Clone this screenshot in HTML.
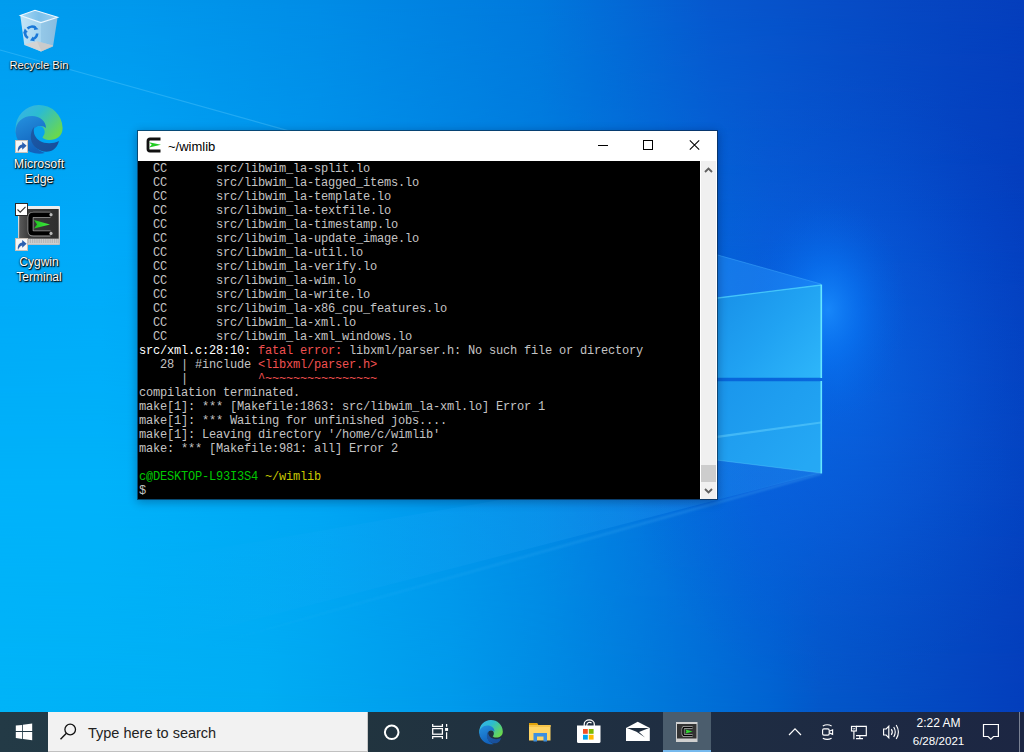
<!DOCTYPE html>
<html><head><meta charset="utf-8">
<style>
*{margin:0;padding:0;box-sizing:border-box}
html,body{width:1024px;height:752px;overflow:hidden;background:#0a6fd8}
body{position:relative;font-family:"Liberation Sans",sans-serif}
.abs{position:absolute}
svg{position:absolute;overflow:visible}
.lbl{position:absolute;width:78px;left:0;text-align:center;color:#fff;font-size:12px;line-height:15px;white-space:nowrap;
 text-shadow:0 0 1px #000,1px 1px 1px #000,0 1px 2px rgba(0,0,0,.7)}
#win{position:absolute;left:137px;top:130px;width:581px;height:370px;border:1px solid rgba(12,36,60,.62);background:#fff;background-clip:padding-box;
 box-shadow:0 2px 9px rgba(0,10,40,.32)}
#title{position:absolute;left:0;top:0;width:579px;height:30px;background:#fff}
#term{position:absolute;left:0;top:30px;width:562px;height:338px;background:#000;overflow:hidden}
#sb{position:absolute;left:562px;top:30px;width:17px;height:338px;background:#f0f0f0;border-left:1px solid #fff;border-right:1px solid #fff}
pre{font-family:"Liberation Mono",monospace;font-size:12px;letter-spacing:-0.2px;line-height:14px;color:#c4c4c4;position:absolute;left:1px;top:0.5px}
.w{color:#fff}.r{color:#f05050}.g{color:#00c800}.y{color:#c8c800}
#taskbar{position:absolute;left:0;top:712px;width:1024px;height:40px;
 background:linear-gradient(90deg,#233a46 0%,#21343f 35%,#1f2e42 65%,#1c2643 100%)}
#search{position:absolute;left:48px;top:0;width:320px;height:40px;background:#f2f2f2;border-right:1px solid #c8c8c8;border-bottom:1px solid #c0c0c0}
.tray{position:absolute;color:#fff;font-size:12px;white-space:nowrap}
</style></head><body>
<svg id="wall" width="1024" height="712" viewBox="0 0 1024 712" style="position:absolute;left:0;top:0">
 <defs>
  <linearGradient id="r0" x1="0" y1="0" x2="1024" y2="0" gradientUnits="userSpaceOnUse">
   <stop offset="0.0000" stop-color="rgb(0,156,238)"/>
   <stop offset="0.1270" stop-color="rgb(0,152,236)"/>
   <stop offset="0.3125" stop-color="rgb(0,140,230)"/>
   <stop offset="0.5273" stop-color="rgb(0,120,220)"/>
   <stop offset="0.6934" stop-color="rgb(6,88,206)"/>
   <stop offset="0.8496" stop-color="rgb(6,74,196)"/>
   <stop offset="1.0000" stop-color="rgb(4,62,188)"/>
  </linearGradient>
  <linearGradient id="r1" x1="0" y1="0" x2="1024" y2="0" gradientUnits="userSpaceOnUse">
   <stop offset="0.0000" stop-color="rgb(0,168,248)"/>
   <stop offset="0.0977" stop-color="rgb(0,170,249)"/>
   <stop offset="0.3125" stop-color="rgb(0,150,238)"/>
   <stop offset="0.5273" stop-color="rgb(0,126,224)"/>
   <stop offset="0.7520" stop-color="rgb(6,90,212)"/>
   <stop offset="0.9473" stop-color="rgb(4,66,194)"/>
   <stop offset="1.0000" stop-color="rgb(4,62,190)"/>
  </linearGradient>
  <linearGradient id="r2" x1="0" y1="0" x2="1024" y2="0" gradientUnits="userSpaceOnUse">
   <stop offset="0.0000" stop-color="rgb(0,178,250)"/>
   <stop offset="0.0977" stop-color="rgb(0,178,250)"/>
   <stop offset="0.3125" stop-color="rgb(0,166,244)"/>
   <stop offset="0.5273" stop-color="rgb(0,140,230)"/>
   <stop offset="0.7422" stop-color="rgb(6,96,216)"/>
   <stop offset="0.8789" stop-color="rgb(6,78,200)"/>
   <stop offset="1.0000" stop-color="rgb(4,66,192)"/>
  </linearGradient>
  <linearGradient id="r3" x1="0" y1="0" x2="1024" y2="0" gradientUnits="userSpaceOnUse">
   <stop offset="0.0000" stop-color="rgb(0,180,248)"/>
   <stop offset="0.2539" stop-color="rgb(0,174,244)"/>
   <stop offset="0.4395" stop-color="rgb(0,155,236)"/>
   <stop offset="0.6250" stop-color="rgb(0,124,220)"/>
   <stop offset="0.7520" stop-color="rgb(0,100,210)"/>
   <stop offset="0.8008" stop-color="rgb(4,88,202)"/>
   <stop offset="1.0000" stop-color="rgb(4,62,188)"/>
  </linearGradient>
  <linearGradient id="m2" x1="0" y1="0" x2="0" y2="712" gradientUnits="userSpaceOnUse"><stop offset="0.6742" stop-color="#fff"/><stop offset="1" stop-color="#000"/></linearGradient>
  <linearGradient id="m1" x1="0" y1="0" x2="0" y2="712" gradientUnits="userSpaceOnUse"><stop offset="0.3090" stop-color="#fff"/><stop offset="0.6742" stop-color="#000"/></linearGradient>
  <linearGradient id="m0" x1="0" y1="0" x2="0" y2="712" gradientUnits="userSpaceOnUse"><stop offset="0" stop-color="#fff"/><stop offset="0.3090" stop-color="#000"/></linearGradient>
  <mask id="mk2" maskUnits="userSpaceOnUse" x="0" y="0" width="1024" height="712"><rect width="1024" height="712" fill="url(#m2)"/></mask>
  <mask id="mk1" maskUnits="userSpaceOnUse" x="0" y="0" width="1024" height="712"><rect width="1024" height="712" fill="url(#m1)"/></mask>
  <mask id="mk0" maskUnits="userSpaceOnUse" x="0" y="0" width="1024" height="712"><rect width="1024" height="712" fill="url(#m0)"/></mask>
  <radialGradient id="glow" cx="828" cy="310" r="100" gradientUnits="userSpaceOnUse" gradientTransform="translate(828 310) scale(0.8 1.15) translate(-828 -310)">
   <stop offset="0" stop-color="#1a8eff" stop-opacity="0.85"/>
   <stop offset="0.4" stop-color="#0a7cfa" stop-opacity="0.5"/>
   <stop offset="1" stop-color="#0060e0" stop-opacity="0"/>
  </radialGradient>
  <radialGradient id="glow2" cx="840" cy="380" r="260" gradientUnits="userSpaceOnUse" gradientTransform="translate(840 380) scale(0.9 1.2) translate(-840 -380)">
   <stop offset="0" stop-color="#0a70f0" stop-opacity="0.55"/>
   <stop offset="0.5" stop-color="#0a62e4" stop-opacity="0.3"/>
   <stop offset="1" stop-color="#0050d0" stop-opacity="0"/>
  </radialGradient>
  <linearGradient id="beamLo" x1="821" y1="0" x2="150" y2="0" gradientUnits="userSpaceOnUse">
   <stop offset="0" stop-color="#38b0ff" stop-opacity="0.26"/>
   <stop offset="1" stop-color="#38b0ff" stop-opacity="0"/>
  </linearGradient>
  <linearGradient id="beamLn" x1="821" y1="0" x2="200" y2="0" gradientUnits="userSpaceOnUse">
   <stop offset="0" stop-color="#60c8ff" stop-opacity="0.3"/>
   <stop offset="1" stop-color="#60c8ff" stop-opacity="0"/>
  </linearGradient>
  <filter id="blur1" x="-10%" y="-50%" width="120%" height="200%"><feGaussianBlur stdDeviation="0.8"/></filter>
  <filter id="blur3" x="-50%" y="-50%" width="200%" height="200%"><feGaussianBlur stdDeviation="4"/></filter>
  <linearGradient id="pUp" x1="718" y1="290" x2="821" y2="378" gradientUnits="userSpaceOnUse">
   <stop offset="0" stop-color="#1890e8"/>
   <stop offset="0.5" stop-color="#20a2f2"/>
   <stop offset="1" stop-color="#2eb6fa"/>
  </linearGradient>
  <linearGradient id="pLo" x1="718" y1="381" x2="821" y2="473" gradientUnits="userSpaceOnUse">
   <stop offset="0" stop-color="#1a96ec"/>
   <stop offset="1" stop-color="#24a8f4"/>
  </linearGradient>
  </defs>
 <rect width="1024" height="712" fill="url(#r3)"/>
 <rect width="1024" height="712" fill="url(#r2)" mask="url(#mk2)"/>
 <rect width="1024" height="712" fill="url(#r1)" mask="url(#mk1)"/>
 <rect width="1024" height="712" fill="url(#r0)" mask="url(#mk0)"/>
 <rect width="1024" height="712" fill="url(#glow2)"/>
 <rect width="1024" height="712" fill="url(#glow)"/>
 <polygon points="540,205 718,255 821,284 718,298 540,330" fill="#2a9cff" opacity="0.42"/>
 <line x1="600" y1="222" x2="821" y2="284" stroke="#44b0ff" stroke-width="1" opacity="0.45"/>
 <polygon points="821,473 718,458 500,500 150,560 150,646.5" fill="url(#beamLo)"/>
 <line x1="821" y1="473.5" x2="200" y2="648" stroke="url(#beamLn)" stroke-width="2" filter="url(#blur1)"/>
 <polygon points="700,300 821,285 821,378 700,378" fill="url(#pUp)"/>
 <polygon points="700,381 821,381 821,473 700,458" fill="url(#pLo)"/>
 <polygon points="700,438 821,422 821,473 700,458" fill="#40c0ff" opacity="0.08"/>
 <polygon points="700,438 821,421.5 821,423.5 700,440.5" fill="#6cd8ff" opacity="0.45"/>
 <line x1="700" y1="300.2" x2="821" y2="285" stroke="#50d4ff" stroke-width="1.4" opacity="0.8"/>
 <line x1="700" y1="458" x2="821" y2="473" stroke="#60d0ff" stroke-width="1" opacity="0.35"/>
 <rect x="700" y="377.5" width="122" height="4" fill="#0a6ad8" opacity="0.5"/>
 <line x1="821.3" y1="284.5" x2="821.3" y2="378" stroke="#66e6ff" stroke-width="1.6"/>
 <line x1="821.3" y1="381" x2="821.3" y2="473.5" stroke="#66e6ff" stroke-width="1.6"/>
 <line x1="0" y1="50" x2="320" y2="139.6" stroke="#70d4ff" stroke-width="1.2" opacity="0.3"/>
</svg>
<!-- ============ desktop icons ============ -->
<!-- Recycle bin -->
<svg width="48" height="48" style="left:15px;top:6px" viewBox="0 0 48 48">
 <defs>
  <linearGradient id="rbL" x1="0" y1="0" x2="1" y2="0">
   <stop offset="0" stop-color="#c2e4f6"/><stop offset="1" stop-color="#a4d4f0"/>
  </linearGradient>
  <linearGradient id="rbR" x1="0" y1="0" x2="1" y2="0">
   <stop offset="0" stop-color="#94c8e8"/><stop offset="1" stop-color="#88bce0"/>
  </linearGradient>
  <linearGradient id="rbIn" x1="0" y1="0" x2="1" y2="0">
   <stop offset="0" stop-color="#a8d8f4"/><stop offset="0.5" stop-color="#7cc0ea"/><stop offset="1" stop-color="#9ad0f0"/>
  </linearGradient>
 </defs>
 <polygon points="5.3,9.6 26,16.6 26,45.6 9.3,39" fill="url(#rbL)"/>
 <polygon points="26,16.6 42.6,11.3 38,40.6 26,45.6" fill="url(#rbR)"/>
 <polygon points="9.3,38.3 22,35.3 38,39.6 26,45.6" fill="#d4d4d4"/>
 <polygon points="22,35.3 38,39.6 38,40.6 26,45.6 26,44" fill="#c4c4c4" opacity="0.6"/>
 <polygon points="5.3,9.6 20,4.3 42.6,11.3 26,16.6" fill="url(#rbIn)" stroke="#eef8ff" stroke-width="1.1"/>
 <g fill="none" stroke="#1a78d8" stroke-width="2.6">
  <path d="M12.5,22.5 A6.2,6.2 0 0 1 20.5,21.8"/>
  <path d="M22.2,27.5 A6.2,6.2 0 0 1 17.8,33"/>
  <path d="M13,32 A6.2,6.2 0 0 1 10.3,25.5"/>
 </g>
 <g fill="#1a78d8">
  <polygon points="19.5,19.5 23.5,23.2 19,24"/>
  <polygon points="19.8,35.2 15,34.5 17.8,30.5"/>
  <polygon points="8,27.5 9.8,22.5 12.8,26"/>
 </g>
</svg>
<div class="lbl" style="top:58px;font-size:11.2px;letter-spacing:0px">Recycle Bin</div>

<!-- Edge -->
<svg width="48" height="48" style="left:15px;top:104.5px" viewBox="0 0 48 48">
 <defs>
  <linearGradient id="edTop" x1="0" y1="0" x2="1" y2="0.7">
   <stop offset="0" stop-color="#3ab0ec"/><stop offset="0.45" stop-color="#2cbcd0"/><stop offset="1" stop-color="#6ad84e"/>
  </linearGradient>
  <linearGradient id="edLeft" x1="0" y1="0" x2="0.4" y2="1">
   <stop offset="0" stop-color="#2592e0"/><stop offset="1" stop-color="#1262bc"/>
  </linearGradient>
  <linearGradient id="edDark" x1="0" y1="0" x2="1" y2="1">
   <stop offset="0" stop-color="#1c5aa8"/><stop offset="1" stop-color="#174d98"/>
  </linearGradient>
 </defs>
 <path d="M0.5,24 A23.5,23.5 0 0 1 47.6,23 C47.6,31 42,35 34,35 C28,35 25,31 27,26 C24,20 17,17 11,19 C6,21 2,25 0.5,28 Z" fill="url(#edTop)"/>
 <path d="M0.5,27 C0.5,17 8,11 17,11 C25,11 31,16 31,23 C28,20 21,20 18,25 C15,31 16,40 24,45 C27,47 30,48 30,48 A24,24 0 0 1 0.5,27 Z" fill="url(#edLeft)"/>
 <path d="M19,22 C15,27 14,36 20,42 C25,47 33,48 38,45 C41,43 43,40 44,36 C38,39 30,39 25,36 C20,33 18,28 19,22 Z" fill="url(#edDark)"/>
 <ellipse cx="24.5" cy="27" rx="5.2" ry="6" fill="#08a2ef"/>
</svg>
<svg width="13" height="13" style="left:15px;top:140px" viewBox="0 0 13 13">
 <rect x="0.5" y="0.5" width="12" height="12" fill="#f6f6f6" stroke="#c8c0b8"/>
 <path d="M3,12 C2.2,8 4,5 7.2,4.6 L7.2,2 L11.6,5.8 L7.2,9.8 L7.2,7.4 C5.4,7.6 4,9.4 3,12 Z" fill="#2b5fb0"/>
</svg>
<div class="lbl" style="top:157px;font-size:12.4px">Microsoft<br>Edge</div>

<!-- Cygwin -->
<svg width="48" height="48" style="left:15px;top:203px" viewBox="0 0 48 48">
 <defs>
  <linearGradient id="cyFr" x1="0" y1="0" x2="0" y2="1">
   <stop offset="0" stop-color="#eeeeee"/><stop offset="1" stop-color="#bdbdbd"/>
  </linearGradient>
  <linearGradient id="cyScr" x1="0" y1="0" x2="1" y2="0">
   <stop offset="0" stop-color="#5a5a5a"/><stop offset="0.25" stop-color="#3a3a3a"/><stop offset="1" stop-color="#2e2e2e"/>
  </linearGradient>
  <linearGradient id="cyGr" x1="0" y1="0" x2="1" y2="0">
   <stop offset="0" stop-color="#20c020"/><stop offset="1" stop-color="#40f040"/>
  </linearGradient>
 </defs>
 <rect x="3" y="3" width="42" height="39" rx="1" fill="url(#cyFr)"/>
 <rect x="4.2" y="6" width="39.5" height="29.8" fill="url(#cyScr)"/>
 <rect x="4.2" y="35.8" width="39.5" height="5.2" fill="#cfcfcf"/>
 <path d="M6,37 h38 M6,39 h38" stroke="#9a9a9a" stroke-width="1" stroke-dasharray="1.2 1"/>
 <path d="M35.5,11.7 H18.5 Q15.5,11.7 15.5,14.7 V27.4 Q15.5,30.4 18.5,30.4 H35.5" fill="none" stroke="#9a9a9a" stroke-width="6"/>
 <path d="M35.5,11.7 H18.5 Q15.5,11.7 15.5,14.7 V27.4 Q15.5,30.4 18.5,30.4 H35.5" fill="none" stroke="#000" stroke-width="4.4"/>
 <circle cx="36" cy="11.7" r="1.6" fill="#bbb"/><circle cx="36" cy="30.4" r="1.6" fill="#bbb"/>
 <path d="M19,17 L35,21.5 L19,25.5 L22,21.5 Z" fill="url(#cyGr)"/>
 <rect x="0.5" y="0.5" width="12" height="12" fill="#fff" stroke="#2a2a2a"/>
 <path d="M2.5,6.5 L5.2,9.2 L10.5,3.8" fill="none" stroke="#333" stroke-width="1.1"/>
</svg>
<svg width="13" height="13" style="left:15px;top:238px" viewBox="0 0 13 13">
 <rect x="0.5" y="0.5" width="12" height="12" fill="#f6f6f6" stroke="#c8c0b8"/>
 <path d="M3,12 C2.2,8 4,5 7.2,4.6 L7.2,2 L11.6,5.8 L7.2,9.8 L7.2,7.4 C5.4,7.6 4,9.4 3,12 Z" fill="#2b5fb0"/>
</svg>
<div class="lbl" style="top:255px">Cygwin<br>Terminal</div>

<!-- ============ terminal window ============ -->
<div id="win">
 <div id="title">
  <svg width="16" height="16" style="left:8px;top:6px" viewBox="0 0 16 16">
   <path d="M14.5,2 H4 Q2,2 2,4 V12 Q2,14 4,14 H14.5" fill="none" stroke="#111" stroke-width="2.8"/>
   <path d="M3,5.2 L15,7.8 L3,10.4 L5.8,7.8 Z" fill="#22cc22"/>
  </svg>
  <div class="abs" style="left:30px;top:8px;font-size:13px;color:#000;line-height:16px">~/wimlib</div>
  <svg width="46" height="30" style="left:441px;top:0" viewBox="0 0 46 30"><path d="M19,14.5 H29" stroke="#000" stroke-width="1"/></svg>
  <svg width="46" height="30" style="left:487px;top:0" viewBox="0 0 46 30"><rect x="18.5" y="9.5" width="9" height="9" fill="none" stroke="#000" stroke-width="1"/></svg>
  <svg width="46" height="30" style="left:533px;top:0" viewBox="0 0 46 30"><path d="M18.8,9.3 L28.2,18.7 M28.2,9.3 L18.8,18.7" stroke="#000" stroke-width="1.05"/></svg>
 </div>
 <div id="term"><pre>  CC       src/libwim_la-split.lo
  CC       src/libwim_la-tagged_items.lo
  CC       src/libwim_la-template.lo
  CC       src/libwim_la-textfile.lo
  CC       src/libwim_la-timestamp.lo
  CC       src/libwim_la-update_image.lo
  CC       src/libwim_la-util.lo
  CC       src/libwim_la-verify.lo
  CC       src/libwim_la-wim.lo
  CC       src/libwim_la-write.lo
  CC       src/libwim_la-x86_cpu_features.lo
  CC       src/libwim_la-xml.lo
  CC       src/libwim_la-xml_windows.lo
<span class="w">src/xml.c:28:10: </span><span class="r">fatal error: </span>libxml/parser.h: No such file or directory
   28 | #include <span class="r">&lt;libxml/parser.h&gt;</span>
      |          <span class="r">^~~~~~~~~~~~~~~~~</span>
compilation terminated.
make[1]: *** [Makefile:1863: src/libwim_la-xml.lo] Error 1
make[1]: *** Waiting for unfinished jobs....
make[1]: Leaving directory '/home/c/wimlib'
make: *** [Makefile:981: all] Error 2

<span class="g">c@DESKTOP-L93I3S4 </span><span class="y">~/wimlib</span>
$</pre></div>
 <div id="sb">
  <svg width="16" height="17" style="left:-1px;top:0" viewBox="0 0 16 17"><path d="M5,11 L8.5,7.5 L12,11" fill="none" stroke="#606060" stroke-width="1.9"/></svg>
  <div class="abs" style="left:0;top:304px;width:15px;height:17px;background:#cdcdcd"></div>
  <svg width="16" height="17" style="left:-1px;top:321px" viewBox="0 0 16 17"><path d="M5,7 L8.5,10.5 L12,7" fill="none" stroke="#606060" stroke-width="1.9"/></svg>
 </div>
</div>

<!-- ============ taskbar ============ -->
<div id="taskbar">
 <svg width="48" height="40" style="left:0;top:0" viewBox="0 0 48 40">
  <path d="M15.8,13.6 L22.2,12.9 V18.9 H15.8 Z M23,12.8 L32.2,11.6 V18.9 H23 Z M15.8,20 H22.2 V26.9 L15.8,26 Z M23,20 H32.2 V28.3 L23,27 Z" fill="#fff"/>
 </svg>
 <div id="search">
  <svg width="24" height="24" style="left:10px;top:8px" viewBox="0 0 24 24">
   <circle cx="12.2" cy="9.5" r="5.3" fill="none" stroke="#111" stroke-width="1.3"/>
   <path d="M8.4,13.3 L2.5,19.2" stroke="#111" stroke-width="1.4"/>
  </svg>
  <div class="abs" style="left:40px;top:13px;font-size:14.5px;color:#222;line-height:17px;white-space:nowrap">Type here to search</div>
 </div>
 <!-- cortana -->
 <svg width="48" height="40" style="left:368px;top:0" viewBox="0 0 48 40"><circle cx="23.7" cy="20.3" r="6.8" fill="none" stroke="#fff" stroke-width="2"/></svg>
 <!-- task view -->
 <svg width="48" height="40" style="left:416px;top:0" viewBox="0 0 48 40">
  <g fill="none" stroke="#fff" stroke-width="1.25">
   <path d="M16.7,12 V14.4 H26.4 V12"/>
   <rect x="16.7" y="16.6" width="9.7" height="5.6"/>
   <path d="M16.7,27 V24.6 H26.4 V27"/>
   <path d="M30.6,12 V14.8 M30.6,20.2 V27"/>
  </g>
  <rect x="29.1" y="16" width="3" height="2.9" fill="#fff"/>
 </svg>
 <!-- edge -->
 <svg width="24" height="24" style="left:479px;top:8px" viewBox="0 0 48 48">
  <path d="M0.5,24 A23.5,23.5 0 0 1 47.6,23 C47.6,31 42,35 34,35 C28,35 25,31 27,26 C24,20 17,17 11,19 C6,21 2,25 0.5,28 Z" fill="url(#edTop)"/>
  <path d="M0.5,27 C0.5,17 8,11 17,11 C25,11 31,16 31,23 C28,20 21,20 18,25 C15,31 16,40 24,45 C27,47 30,48 30,48 A24,24 0 0 1 0.5,27 Z" fill="url(#edLeft)"/>
  <path d="M19,22 C15,27 14,36 20,42 C25,47 33,48 38,45 C41,43 43,40 44,36 C38,39 30,39 25,36 C20,33 18,28 19,22 Z" fill="url(#edDark)"/>
  <ellipse cx="24.5" cy="27" rx="5.2" ry="6" fill="#20333f"/>
 </svg>
 <!-- explorer -->
 <svg width="24" height="24" style="left:528px;top:8px" viewBox="0 0 24 24">
  <path d="M1,3 H9 L10.5,4.5 H10 V6 H1 Z" fill="#e0a20a"/>
  <rect x="1" y="5" width="21.5" height="15.5" fill="#ffd565"/>
  <rect x="1" y="5" width="21.5" height="2" fill="#f5c44a"/>
  <path d="M5.5,21.5 V13 H19 V21.5 H15.5 V16.5 H9 V21.5 Z" fill="#3d8fe0"/>
 </svg>
 <!-- store -->
 <svg width="26" height="26" style="left:576px;top:7px" viewBox="0 0 26 26">
  <path d="M8.2,7 V5.2 A5,4.3 0 0 1 18.3,5.2 V7" fill="none" stroke="#fff" stroke-width="1.25"/>
  <path d="M10.8,7 V6 A3,3 0 0 1 15.6,4" fill="none" stroke="#fff" stroke-width="1.1"/>
  <path d="M1,6.5 H24.5 V22.5 Q24.5,24 23,24 H2.5 Q1,24 1,22.5 Z" fill="#fff"/>
  <rect x="7" y="10" width="4.8" height="4.8" fill="#f25022"/>
  <rect x="12.8" y="10" width="4.8" height="4.8" fill="#7fba00"/>
  <rect x="7" y="15.8" width="4.8" height="4.8" fill="#00a4ef"/>
  <rect x="12.8" y="15.8" width="4.8" height="4.8" fill="#ffb900"/>
 </svg>
 <!-- mail -->
 <svg width="26" height="22" style="left:625px;top:9px" viewBox="0 0 26 22">
  <path d="M1,7 L12.7,0.7 L24.8,7 V20 H1 Z" fill="#fff"/>
  <path d="M2,7 H24 L14,11 L20,16.5 L11.5,10.8 Z" fill="#1f2d3e"/>
 </svg>
 <!-- cygwin active -->
 <div class="abs" style="left:663px;top:0;width:48px;height:40px;background:#4b5d6d"></div>
 <div class="abs" style="left:663px;top:38px;width:48px;height:2px;background:#76b9ed"></div>
 <svg width="22" height="21" style="left:676px;top:10px" viewBox="0 0 22 21">
  <rect x="0" y="0" width="21.5" height="20" fill="#d0d0d0"/>
  <rect x="1" y="2" width="19.5" height="14.5" fill="#333"/>
  <path d="M16.5,5.5 H8.5 Q7,5.5 7,7 V12 Q7,13.5 8.5,13.5 H16.5" fill="none" stroke="#bbb" stroke-width="2.8"/>
  <path d="M16.5,5.5 H8.5 Q7,5.5 7,7 V12 Q7,13.5 8.5,13.5 H16.5" fill="none" stroke="#000" stroke-width="1.6"/>
  <path d="M9.5,7.5 L16.5,9.5 L9.5,11.5 L10.5,9.5 Z" fill="#30e030"/>
 </svg>

 <!-- tray -->
 <svg width="14" height="10" style="left:788px;top:15px" viewBox="0 0 14 10"><path d="M1,8 L7,1.8 L13,8" fill="none" stroke="#fff" stroke-width="1.2"/></svg>
 <svg width="14" height="18" style="left:821px;top:11px" viewBox="0 0 14 18">
  <rect x="1.6" y="5.9" width="6.6" height="6.2" rx="1.3" fill="none" stroke="#fff" stroke-width="1.15"/>
  <path d="M8.3,8.2 L11.6,6.8 V11.3 L8.3,9.9" fill="none" stroke="#fff" stroke-width="1.15"/>
  <path d="M1.8,3 Q6.2,0.6 10.6,3 M1.8,15.2 Q6.2,17.6 10.6,15.2" fill="none" stroke="#fff" stroke-width="1.1"/>
 </svg>
 <svg width="19" height="16" style="left:850px;top:13px" viewBox="0 0 19 16">
  <path d="M6,1.4 H16.3 V10.6 H6" fill="none" stroke="#fff" stroke-width="1.15"/>
  <rect x="1.5" y="1.4" width="4.8" height="4.6" fill="none" stroke="#fff" stroke-width="1.15"/>
  <path d="M2.8,3 L3.9,4.4 L5,3" fill="none" stroke="#fff" stroke-width="0.8"/>
  <path d="M3.9,6 V14.2 M9.8,10.6 V13.6 M6,13.6 H13" fill="none" stroke="#fff" stroke-width="1.15"/>
 </svg>
 <svg width="19" height="16" style="left:882px;top:12px" viewBox="0 0 19 16">
  <path d="M1.6,5 H4.2 L6.8,2.2 V13.8 L4.2,11 H1.6 Z" fill="none" stroke="#fff" stroke-width="1.15"/>
  <path d="M9.3,5.2 Q11.3,8 9.3,10.8 M11.7,3 Q14.8,8 11.7,13 M14.2,1 Q18.6,8 14.2,15" fill="none" stroke="#fff" stroke-width="1.15"/>
 </svg>
 <div class="tray" style="left:909px;top:4px;width:59px;text-align:center;line-height:14px">2:22 AM</div>
 <div class="tray" style="left:909px;top:22px;width:59px;text-align:center;line-height:14px;font-size:11.6px">6/28/2021</div>
 <svg width="18" height="17" style="left:982px;top:11px" viewBox="0 0 18 17">
  <path d="M1.5,1.5 H16.4 V13.5 H11.5 L8.8,16.2 L6.1,13.5 H1.5 Z" fill="none" stroke="#fff" stroke-width="1.2"/>
 </svg>
 <div class="abs" style="left:1019px;top:0;width:1px;height:40px;background:#7a8294"></div>
</div>
</body></html>
